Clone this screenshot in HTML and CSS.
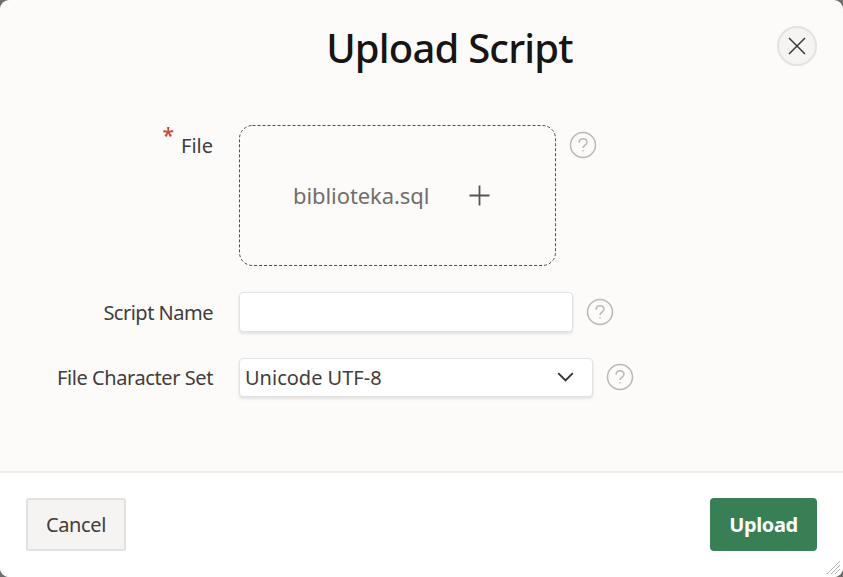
FILE: index.html
```html
<!DOCTYPE html>
<html lang="en">
<head>
<meta charset="utf-8">
<title>Upload Script</title>
<link rel="stylesheet" href="styles.css">
</head>
<body>
<svg class="sprite" aria-hidden="true">
  <symbol id="help" viewBox="0 0 28 28"><circle cx="14" cy="14" r="12.5"/><path d="M10 11.8c.2-5.3 8-5.2 8-.6 0 3-4 2.8-4 5.8M14 19v1.2"/></symbol>
</svg>
<main class="dialog">
  <header class="header">
    <h1 class="title">Upload Script</h1>
    <button class="close" aria-label="Close"><svg width="20" height="20" viewBox="0 0 20 20"><path d="M2 2l16 16M18 2L2 18"/></svg></button>
  </header>
  <form class="form">
    <div class="row row-file">
      <div class="label"><span class="required">*</span><span class="label-file">File</span></div>
      <div class="dropzone">
        <svg class="outline" width="317" height="141"><rect x=".5" y=".5" width="316" height="140" rx="13"/></svg>
        <span class="filename">biblioteka.sql</span>
        <svg class="plus" width="21" height="21" viewBox="0 0 21 21"><path d="M.5 10.5h20M10.5.5v20"/></svg>
      </div>
      <svg class="help"><use href="#help"/></svg>
    </div>
    <div class="row row-name">
      <label class="label" for="name"><span class="label-name">Script Name</span></label>
      <input class="field input" id="name">
      <svg class="help"><use href="#help"/></svg>
    </div>
    <div class="row row-charset">
      <div class="label"><span class="label-charset">File Character Set</span></div>
      <div class="field select"><span class="value">Unicode UTF-8</span><svg width="17" height="10" viewBox="0 0 17 10"><path d="M1.2 1.2l7.3 7.2 7.3-7.2"/></svg></div>
      <svg class="help"><use href="#help"/></svg>
    </div>
  </form>
  <footer class="footer">
    <button class="button cancel">Cancel</button>
    <button class="button upload">Upload</button>
    <svg class="grip" width="15" height="14" viewBox="0 0 15 14"><path d="M1 13L14 0M5 13l9-9M9 13l5-5"/></svg>
  </footer>
</main>
</body>
</html>
```
FILE: styles.css
```css
* { box-sizing: border-box; }
body { margin: 0; background: #706e6d; font: 20px/28px "Noto Sans", sans-serif; color: #403d3b; }
svg { display: block; fill: none; flex: none; }
.sprite { position: absolute; width: 0; height: 0; }
.dialog { height: 577px; display: flex; flex-direction: column; background: #fcfbfa; border-radius: 9px; overflow: hidden; }
.header { display: grid; grid-template-columns: 40px 1fr 40px; padding: 26px 26px 0; height: 92px; }
.title { grid-column: 2; margin: 0 0 0 56px; text-align: center; font-size: 40px; line-height: 43px; font-weight: 500; color: #161513; letter-spacing: -.8px; white-space: nowrap; }
.close { width: 40px; height: 40px; padding: 0; display: grid; place-items: center; border: 2px solid #e3e2e1; border-radius: 50%; background: #f5f4f3; }
.close path { stroke: #3a3836; stroke-width: 1.5; }
.form { flex: 1; padding-top: 33px; }
.row { display: flex; align-items: center; }
.label { width: 213px; margin-right: 26px; display: flex; justify-content: flex-end; white-space: nowrap; }
.label-name { letter-spacing: -.5px; }
.label-charset { letter-spacing: -.42px; }
.row-file { align-items: flex-start; height: 141px; }
.row-file .label { padding-top: 7px; }
.row-file .help { margin-top: 6px; }
.required { color: #c74634; font-size: 21px; font-weight: 500; line-height: 20px; margin: -7px 7px 0 0; }
.dropzone { position: relative; width: 317px; height: 141px; display: flex; align-items: center; padding-left: 54px; }
.outline { position: absolute; inset: 0; stroke: #514f4d; stroke-dasharray: 3 2; }
.filename { width: 176px; margin-top: -2px; font-size: 22px; color: #706e6c; letter-spacing: -.08px; }
.plus { stroke: #565452; stroke-width: 1.8; }
.help { width: 28px; height: 28px; margin-left: 12.5px; stroke: #bab8b6; stroke-width: 1.5; }
.field { border: 1px solid #e4e2e1; border-radius: 4px; background: #fff; box-shadow: 0 2px 3px #0000001a; }
.row-name { height: 40px; margin-top: 26px; }
.row-name .label { padding-top: 1px; }
.input { width: 334px; height: 40px; padding: 0; }
.row-charset { height: 39px; margin-top: 26px; }
.row-charset .help { margin-top: -1px; }
.select { width: 354px; height: 39px; display: flex; align-items: center; justify-content: space-between; padding: 0 18px 0 5px; }
.select svg { stroke: #343230; stroke-width: 1.8; margin-top: -1px; }
.footer { position: relative; height: 106px; display: flex; justify-content: space-between; padding: 25px 26px 0; background: #fff; border-top: 2px solid #eeedec; }
.button { height: 53px; padding: 0; font: inherit; letter-spacing: -.4px; border-radius: 3px; }
.cancel { width: 100px; border: 2px solid #e2e1e0; background: #f5f4f3; color: #403d3b; }
.upload { width: 107px; border: 0; border-radius: 4px; background: #397f56; color: #fff; font-weight: 700; }
.grip { position: absolute; right: 2px; bottom: 2px; stroke: #b4b3b2; }
```
